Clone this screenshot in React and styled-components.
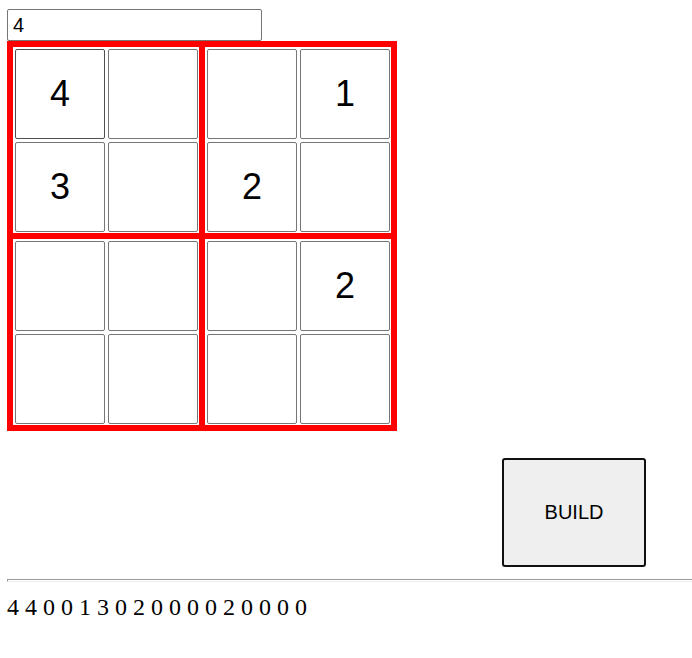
import React, { useState } from "react";
import styled, { createGlobalStyle } from "styled-components";

const GlobalStyle = createGlobalStyle`
  *, *::before, *::after {
    box-sizing: border-box;
  }

  body {
    margin: 0;
    background: #ffffff;
    color: #000000;
    font-family: "Liberation Serif", "Times New Roman", serif;
  }
`;

const Page = styled.main`
  display: flex;
  flex-direction: column;
  padding: 9px 0 9px 7px;
`;

const Field = styled.input`
  margin: 0;
  border: 1px solid #767676;
  border-radius: 2px;
  background: #ffffff;
  color: #000000;
  font-family: "Liberation Sans", Arial, sans-serif;
  outline: none;

  &:focus {
    border-color: #101010;
  }
`;

const SizeField = styled(Field)`
  width: 255px;
  height: 32px;
  padding: 1px 5px;
  font-size: 20px;
`;

const Board = styled.section`
  display: grid;
  grid-template-columns: repeat(2, max-content);
  gap: 6px;
  align-self: flex-start;
  border: 6px solid #ff0000;
  background: #ff0000;
`;

const Block = styled.div`
  display: grid;
  grid-template-columns: repeat(2, 90px);
  grid-auto-rows: 90px;
  gap: 3px;
  padding: 2px 1px 1px 2px;
  background: #ffffff;
`;

const Cell = styled(Field)`
  width: 100%;
  height: 100%;
  padding: 0;
  border-color: ${({ $active }) => ($active ? "#4f4f4f" : "#767676")};
  font-size: 36px;
  text-align: center;
`;

const BuildButton = styled.button`
  align-self: flex-end;
  width: 144px;
  height: 109px;
  margin: 27px 46px 12px 0;
  border: 2px solid #101010;
  border-radius: 3px;
  background: #efefef;
  color: #000000;
  font-family: "Liberation Sans", Arial, sans-serif;
  font-size: 20px;
`;

const Divider = styled.hr`
  width: 100%;
  height: 3px;
  margin: 0;
  border: 1px solid;
  border-color: #9a9a9a #eeeeee #eeeeee #9a9a9a;
  border-right: 0;
`;

const Output = styled.output`
  margin-top: 11px;
  font-size: 24px;
  line-height: 28px;
`;

const SIZE = 4;
const BLOCK = 2;
const START = [4, 0, 0, 1, 3, 0, 2, 0, 0, 0, 0, 2, 0, 0, 0, 0];

// Cell indexes of each block, in reading order.
const BLOCKS = Array.from({ length: SIZE }, (_, b) => {
  const top = Math.floor(b / BLOCK) * BLOCK;
  const left = (b % BLOCK) * BLOCK;
  return Array.from(
    { length: SIZE },
    (_, i) => (top + Math.floor(i / BLOCK)) * SIZE + left + (i % BLOCK)
  );
});

export default function App() {
  const [size, setSize] = useState(String(SIZE));
  const [cells, setCells] = useState(START);
  const [active, setActive] = useState(0);
  const [result, setResult] = useState([SIZE, ...START].join(" "));

  const setCell = (index, text) => {
    const value = Number(text.replace(/\D/g, "").slice(-1));
    setCells(cells.map((old, i) => (i === index ? value : old)));
  };

  return (
    <>
      <GlobalStyle />
      <Page>
        <SizeField
          type="text"
          aria-label="Size"
          value={size}
          onChange={(e) => setSize(e.target.value)}
        />
        <Board aria-label="Board">
          {BLOCKS.map((indexes) => (
            <Block key={indexes[0]}>
              {indexes.map((index) => (
                <Cell
                  key={index}
                  type="text"
                  inputMode="numeric"
                  aria-label={`Row ${Math.floor(index / SIZE) + 1}, column ${(index % SIZE) + 1}`}
                  $active={index === active}
                  value={cells[index] || ""}
                  onFocus={() => setActive(index)}
                  onChange={(e) => setCell(index, e.target.value)}
                />
              ))}
            </Block>
          ))}
        </Board>
        <BuildButton
          type="button"
          onClick={() => setResult([size, ...cells].join(" "))}
        >
          BUILD
        </BuildButton>
        <Divider />
        <Output>{result}</Output>
      </Page>
    </>
  );
}
